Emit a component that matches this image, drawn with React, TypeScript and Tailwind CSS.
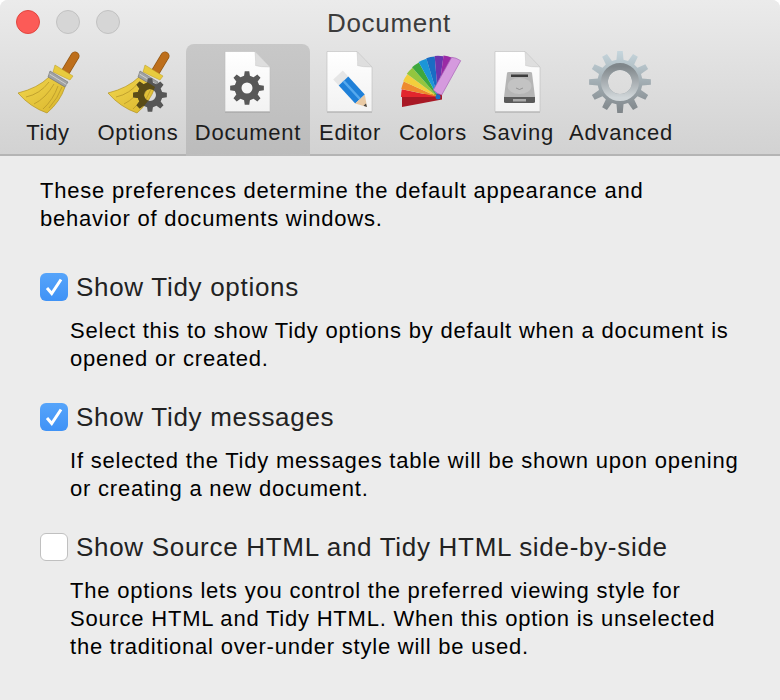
import React from "react";

function gearPath(cx: number, cy: number, r: number, root: number, hole: number, teeth: number) {
  // gear outline built from teeth, hole cut with evenodd
  const pts: string[] = [];
  const step = (Math.PI * 2) / teeth;
  const p = (ang: number, rad: number) => `${(cx + Math.cos(ang) * rad).toFixed(2)} ${(cy + Math.sin(ang) * rad).toFixed(2)}`;
  for (let i = 0; i < teeth; i++) {
    const a = i * step - Math.PI / 2;
    pts.push(p(a - step * 0.17, r));
    pts.push(p(a + step * 0.17, r));
    pts.push(p(a + step * 0.3, root));
    pts.push(p(a + step * 0.7, root));
  }
  return `M${pts.join("L")}Z M${cx - hole} ${cy}a${hole} ${hole} 0 1 0 ${hole * 2} 0a${hole} ${hole} 0 1 0 ${-hole * 2} 0Z`;
}

const broomHead = "M33 27 Q22 38 2 43 Q14 57 31 63 Q44 52 49 37 Z";

function Broom({ id }: { id: string }) {
  return (
    <g>
      <defs>
        <linearGradient id={id} x1="0" y1="0" x2="1" y2="1">
          <stop offset="0" stopColor="#f2d74e" />
          <stop offset="1" stopColor="#d9b52c" />
        </linearGradient>
      </defs>
      <path d="M50 21 L59 6" stroke="#8f5412" strokeWidth="9" strokeLinecap="round" />
      <path d="M50 21 L59 6" stroke="#bd6f1c" strokeWidth="7.5" strokeLinecap="round" />
      <path d="M39 15 L57 26 L54 30 L37 22 Z" fill="#e8cb3f" stroke="#b99a22" strokeWidth="0.5" />
      <path d={broomHead} fill={`url(#${id})`} stroke="#b3931f" strokeWidth="0.7" />
      <path d="M33 32 Q24 44 10 47 M38 34 Q30 48 18 54 M42 36 Q37 50 27 59 M46 37 Q42 48 33 58" stroke="#b8982a" strokeWidth="0.8" fill="none" />
      <path d="M34 21 L52 32 L49 37 L32 27 Z" fill="#a0a2a3" stroke="#6f7172" strokeWidth="0.6" />
      <path d="M33.5 24 L50.5 34.5" stroke="#cfd0d0" strokeWidth="1" />
    </g>
  );
}

function TidyIcon() {
  return (
    <svg width="64" height="64" viewBox="0 0 64 64" className="block">
      <Broom id="broom-a" />
    </svg>
  );
}

function OptionsIcon() {
  const gear = gearPath(44, 45, 17, 12.5, 6, 8);
  return (
    <svg width="64" height="64" viewBox="0 0 64 64" className="block">
      <defs>
        <clipPath id="head-clip">
          <path d={broomHead} />
        </clipPath>
      </defs>
      <Broom id="broom-b" />
      <path d={gear} fill="#565656" fillRule="evenodd" />
      <path d={gear} fill="#5a4c16" fillRule="evenodd" clipPath="url(#head-clip)" />
    </svg>
  );
}

function Page({ id, children }: { id: string; children?: React.ReactNode }) {
  return (
    <svg width="64" height="64" viewBox="0 0 64 64" className="block">
      <defs>
        <linearGradient id={id} x1="0" y1="0" x2="0" y2="1">
          <stop offset="0" stopColor="#ffffff" />
          <stop offset="1" stopColor="#f2f2f2" />
        </linearGradient>
      </defs>
      <path d="M9 61.5 H54 V62.5 H9 Z" fill="#8e8e8e" opacity="0.7" />
      <path d="M9 1.5 H39 L54 17 V61.5 H9 Z" fill={`url(#${id})`} stroke="#bcbcbc" strokeWidth="0.6" />
      <path d="M39 1.5 Q40 14 39.5 15.5 Q44 17 54 17 Z" fill="#dedede" stroke="#c6c6c6" strokeWidth="0.5" />
      {children}
    </svg>
  );
}

function wedge(cx: number, cy: number, r: number, a1: number, a2: number) {
  const pt = (a: number) => `${(cx + Math.cos((a * Math.PI) / 180) * r).toFixed(2)} ${(cy + Math.sin((a * Math.PI) / 180) * r).toFixed(2)}`;
  return `M${cx} ${cy}L${pt(a1)}A${r} ${r} 0 0 1 ${pt(a2)}Z`;
}

function FanIcon() {
  const colors = ["#e2262d", "#ee8a2e", "#f3cf3c", "#93c63f", "#3ea83e", "#1b96d8", "#1a6cc4", "#6b35ae", "#9b2aa5"];
  return (
    <svg width="64" height="64" viewBox="0 0 64 64" className="block">
      <path d="M1 57 L41 49.5 L41 44 L1 44 Z" fill="#a81825" />
      {colors.map((c, i) => (
        <path key={c} d={wedge(37, 47, 37 + i * 0.6, 180 + i * 12.2, 180 + (i + 1) * 12.2)} fill={c} />
      ))}
      <path d="M32.3 40 L50.7 7.3 Q55 7.5 59.7 10.7 L40.7 45 Q36 44 32.3 40 Z" fill="#d59ade" stroke="#a964b7" strokeWidth="0.7" />
      <circle cx="37" cy="47" r="2.5" fill="#1a6cc4" />
    </svg>
  );
}

function DiskGlyph() {
  return (
    <g>
      <path d="M21 23 Q21 22 23 22 H44 Q46 22 46 23 L49 47 H18 Z" fill="#b5b5b5" />
      <path d="M18 47 H49 V52 Q49 53 47 53 H20 Q18 53 18 52 Z" fill="#5a5a5a" />
      <ellipse cx="33.5" cy="36" rx="12" ry="8" fill="#c3c3c3" />
      <path d="M30 38 Q33.5 41 37 38" stroke="#888" strokeWidth="0.8" fill="none" />
      <rect x="25" y="24.5" width="17" height="2.5" fill="#3c3c3c" />
      <rect x="27" y="49" width="13" height="2.5" fill="#a8a8a8" />
    </g>
  );
}

function AdvancedIcon() {
  return (
    <svg width="64" height="64" viewBox="0 0 64 64" className="block">
      <defs>
        <linearGradient id="adv" x1="0" y1="0" x2="0" y2="1">
          <stop offset="0" stopColor="#c6d6dd" />
          <stop offset="1" stopColor="#7f8589" />
        </linearGradient>
        <linearGradient id="adv-ring" x1="0" y1="0" x2="0" y2="1">
          <stop offset="0" stopColor="#80878b" />
          <stop offset="1" stopColor="#d0d6d9" />
        </linearGradient>
      </defs>
      <path d={gearPath(31, 32, 31, 22.5, 12, 12)} fill="url(#adv)" fillRule="evenodd" />
      <circle cx="31" cy="32" r="15.5" fill="none" stroke="url(#adv-ring)" strokeWidth="7" />
    </svg>
  );
}

const tabs = [
  { label: "Tidy", icon: <TidyIcon />, w: "w-[90px] pl-[6px]" },
  { label: "Options", icon: <OptionsIcon />, w: "w-[96px]" },
  {
    label: "Document",
    icon: (
      <Page id="page-doc">
        <path d={gearPath(31, 38, 17, 12.5, 5.5, 8)} fill="#585858" fillRule="evenodd" />
      </Page>
    ),
    w: "w-[124px]",
    active: true,
  },
  {
    label: "Editor",
    icon: (
      <Page id="page-edit">
        <path d="M15.2 29.4 L24.8 20.6 L30.3 26.6 L20.7 35.4 Z" fill="#e6e6e6" />
        <path d="M20.7 35.4 L30.3 26.6 L46.8 44.6 L37.2 53.4 Z" fill="#1f80d8" />
        <path d="M25.5 31 L42 49" stroke="#56a9ee" strokeWidth="2.5" />
        <path d="M37.2 53.4 L46.8 44.6 L49 57 Z" fill="#e8c9a4" />
        <path d="M45.5 55.7 L48 53.4 L49 57 Z" fill="#444" />
      </Page>
    ),
    w: "w-[80px]",
  },
  { label: "Colors", icon: <FanIcon />, w: "w-[86px]" },
  {
    label: "Saving",
    icon: (
      <Page id="page-save">
        <DiskGlyph />
      </Page>
    ),
    w: "w-[84px]",
  },
  { label: "Advanced", icon: <AdvancedIcon />, w: "w-[122px]" },
];

const options = [
  {
    title: "Show Tidy options",
    checked: true,
    text: ["Select this to show Tidy options by default when a document is", "opened or created."],
  },
  {
    title: "Show Tidy messages",
    checked: true,
    text: ["If selected the Tidy messages table will be shown upon opening", "or creating a new document."],
  },
  {
    title: "Show Source HTML and Tidy HTML side-by-side",
    checked: false,
    text: [
      "The options lets you control the preferred viewing style for",
      "Source HTML and Tidy HTML. When this option is unselected",
      "the traditional over-under style will be used.",
    ],
  },
];

export default function App() {
  return (
    <div className="h-[700px] w-[780px] overflow-hidden bg-white font-['Liberation_Sans',Arial,sans-serif]">
      <div className="h-full rounded-t-[8px] bg-[#ececec]">
        <div className="relative h-[156px] rounded-t-[8px] border-b-2 border-[#b4b4b4] bg-gradient-to-b from-[#ebebeb] to-[#d2d2d2]">
          <div className="absolute left-[16px] top-[10px] flex gap-[16px]">
            <div className="h-[24px] w-[24px] rounded-full border border-[#e2463f] bg-[#fc5b57]" />
            <div className="h-[24px] w-[24px] rounded-full border border-[#c2c2c2] bg-[#d6d6d6]" />
            <div className="h-[24px] w-[24px] rounded-full border border-[#c2c2c2] bg-[#d6d6d6]" />
          </div>
          <div className="pr-[2px] pt-[8px] text-center text-[26px] leading-[30px] tracking-[0.7px] text-[#3c3c3c]">Document</div>
          <div className="mt-[6px] flex">
            {tabs.map((t) => (
              <div
                key={t.label}
                className={`flex h-[112px] shrink-0 flex-col items-center rounded-t-[8px] ${t.w} ${t.active ? "bg-gradient-to-b from-[#c8c8c8] to-[#bcbcbc]" : ""}`}
              >
                <div className="mt-[6px]">{t.icon}</div>
                <div className="mt-[6px] text-[22px] leading-[26px] tracking-[0.75px] text-[#1c1c1c]">{t.label}</div>
              </div>
            ))}
          </div>
        </div>
        <div className="px-[40px] pt-[21px] text-[22px] leading-[28px] tracking-[0.78px] text-black">
          <p>These preferences determine the default appearance and</p>
          <p>behavior of documents windows.</p>
          <div className="mt-[34px] flex flex-col gap-[24px]">
            {options.map((o) => (
              <div key={o.title}>
                <div className="flex h-[40px] items-center gap-[8px]">
                  {o.checked ? (
                    <div className="h-[28px] w-[28px] rounded-[6px] bg-gradient-to-b from-[#56a4fa] to-[#3f92f6]">
                      <svg width="28" height="28" viewBox="0 0 28 28" className="block">
                        <path d="M7 15 L11.7 20.5 L21 6.5" fill="none" stroke="#fff" strokeWidth="3" />
                      </svg>
                    </div>
                  ) : (
                    <div className="h-[28px] w-[28px] rounded-[6px] border border-[#c0c0c0] bg-white" />
                  )}
                  <span className="text-[26px] tracking-[0.7px] text-[#222]">{o.title}</span>
                </div>
                <div className="mt-[10px] pl-[30px]">
                  {o.text.map((l) => (
                    <p key={l}>{l}</p>
                  ))}
                </div>
              </div>
            ))}
          </div>
        </div>
      </div>
    </div>
  );
}
